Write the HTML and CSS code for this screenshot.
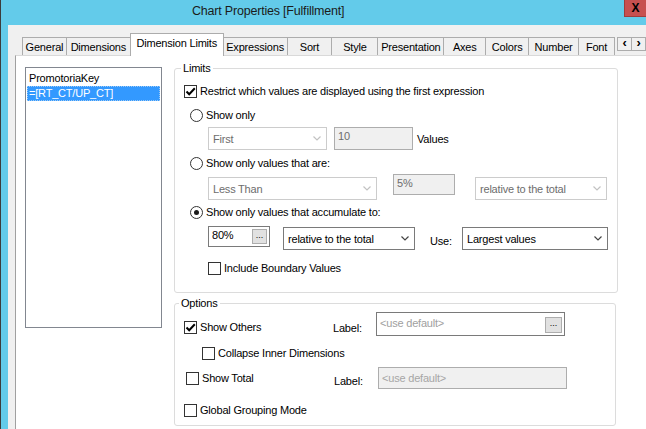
FILE: index.html
```html
<!DOCTYPE html>
<html>
<head>
<meta charset="utf-8">
<link rel="stylesheet" href="styles.css">
</head>
<body>
<div class="window">
  <div class="titlebar">
    <span class="title">Chart Properties [Fulfillment]</span>
    <div class="close">X</div>
  </div>
  <div class="client">
    <div class="tabstrip">
      <div class="tab w-general">General</div>
      <div class="tab w-dims">Dimensions</div>
      <div class="tab active w-dimlim">Dimension Limits</div>
      <div class="tab w-expr">Expressions</div>
      <div class="tab w-sort">Sort</div>
      <div class="tab w-style">Style</div>
      <div class="tab w-pres">Presentation</div>
      <div class="tab w-axes">Axes</div>
      <div class="tab w-colors">Colors</div>
      <div class="tab w-number">Number</div>
      <div class="tab w-font">Font</div>
      <div class="scroller">
        <div class="sbtn">&lsaquo;</div>
        <div class="sbtn">&rsaquo;</div>
      </div>
    </div>
    <div class="tabpage">
      <div class="list">
        <div class="item">PromotoriaKey</div>
        <div class="item sel">=[RT_CT/UP_CT]</div>
      </div>
      <div class="right">
        <div class="group limits">
          <span class="legend">Limits</span>
          <div class="row l1">
            <span class="cb"><svg viewBox="0 0 11 11"><path d="M1.5 5.5 L4.2 8.3 L9.8 2.2" fill="none" stroke="#000" stroke-width="2"/></svg></span>
            <span>Restrict which values are displayed using the first expression</span>
          </div>
          <div class="row l2">
            <span class="rb"></span><span>Show only</span>
          </div>
          <div class="row l3">
            <div class="combo dis w119"><span>First</span><svg viewBox="0 0 8 5"><path d="M0.5 0.5 L4 4 L7.5 0.5" fill="none" stroke="#c2c2c2" stroke-width="1.2"/></svg></div>
            <div class="edit dis e10">10</div>
            <span class="values">Values</span>
          </div>
          <div class="row l4">
            <span class="rb"></span><span>Show only values that are:</span>
          </div>
          <div class="row l5">
            <div class="combo dis w169 mt3"><span>Less Than</span><svg viewBox="0 0 8 5"><path d="M0.5 0.5 L4 4 L7.5 0.5" fill="none" stroke="#c2c2c2" stroke-width="1.2"/></svg></div>
            <div class="edit dis e5">5%</div>
            <div class="combo dis w132 mt3 ml20"><span>relative to the total</span><svg viewBox="0 0 8 5"><path d="M0.5 0.5 L4 4 L7.5 0.5" fill="none" stroke="#c2c2c2" stroke-width="1.2"/></svg></div>
          </div>
          <div class="row l6">
            <span class="rb on"></span><span>Show only values that accumulate to:</span>
          </div>
          <div class="row l7">
            <div class="edit e80"><span>80%</span><span class="dots">...</span></div>
            <div class="combo w132 mt1 ml13"><span>relative to the total</span><svg viewBox="0 0 8 5"><path d="M0.5 0.5 L4 4 L7.5 0.5" fill="none" stroke="#444" stroke-width="1.2"/></svg></div>
            <span class="use">Use:</span>
            <div class="combo w146 mt1"><span>Largest values</span><svg viewBox="0 0 8 5"><path d="M0.5 0.5 L4 4 L7.5 0.5" fill="none" stroke="#444" stroke-width="1.2"/></svg></div>
          </div>
          <div class="row l8">
            <span class="cb"></span><span>Include Boundary Values</span>
          </div>
        </div>
        <div class="group options">
          <span class="legend">Options</span>
          <div class="row o1">
            <div class="col1 c149"><span class="cb"><svg viewBox="0 0 11 11"><path d="M1.5 5.5 L4.2 8.3 L9.8 2.2" fill="none" stroke="#000" stroke-width="2"/></svg></span><span>Show Others</span></div>
            <span class="lbl l43">Label:</span>
            <div class="edit txt w189 h24"><span class="ph">&lt;use default&gt;</span><span class="dots big">...</span></div>
          </div>
          <div class="row o2">
            <span class="cb"></span><span>Collapse Inner Dimensions</span>
          </div>
          <div class="row o3">
            <div class="col1 c150"><span class="cb"></span><span>Show Total</span></div>
            <span class="lbl l44">Label:</span>
            <div class="edit dis txt w189 h22"><span class="ph">&lt;use default&gt;</span></div>
          </div>
          <div class="row o4">
            <span class="cb"></span><span>Global Grouping Mode</span>
          </div>
        </div>
      </div>
    </div>
  </div>
</div>
</body>
</html>
```
FILE: styles.css
```css
* { box-sizing: border-box; }
html, body { margin: 0; padding: 0; }
body {
  width: 646px; height: 429px; overflow: hidden;
  font-family: "Liberation Sans", Arial, sans-serif;
  font-size: 11px; letter-spacing: -0.2px; color: #000; background: #fff;
}
.window {
  height: 429px; display: flex; flex-direction: column;
  background: #63cbea; border-left: 1px solid #3c3c3c;
}
.titlebar { height: 25px; flex: none; display: flex; align-items: flex-start; }
.title { padding-left: 191px; padding-top: 4px; font-size: 12.5px; line-height: 15px; color: #1b1b1b; }
.close {
  margin-left: auto; width: 22px; height: 17px;
  background: #c75050; border: 1px solid #a03c3c; border-top: none; border-right: none;
  display: flex; align-items: center; justify-content: center;
  font-weight: bold; font-size: 12px; color: #000; letter-spacing: 0;
}
.client {
  flex: 1; min-height: 0; margin-left: 7px; background: #f0f0f0;
  display: flex; flex-direction: column;
}
.tabstrip {
  height: 30px; flex: none; display: flex; align-items: flex-end;
  padding-left: 14px;
}
.tab {
  height: 18px; border: 1px solid #acacac; border-bottom: none;
  background: #f0f0f0; display: flex; align-items: center; justify-content: center;
  white-space: nowrap; padding-top: 1px;
}
.tab + .tab { margin-left: -1px; }
.tab.active {
  height: 23px; background: #fff; position: relative; z-index: 1;
  margin-bottom: -1px; align-items: flex-start; padding-top: 3px;
}
.w-general { width: 45px; }
.w-dims { width: 65px; }
.w-dimlim { width: 94px; }
.w-expr { width: 65px; }
.w-sort { width: 46px; }
.w-style { width: 47px; }
.w-pres { width: 67px; }
.w-axes { width: 43px; }
.w-colors { width: 44px; }
.w-number { width: 51px; }
.w-font { width: 37px; }
.scroller { display: flex; align-self: flex-start; margin-top: 12px; margin-left: 2px; }
.sbtn {
  width: 15px; height: 14px; border: 1px solid #acacac; background: #f0f0f0;
  display: flex; align-items: center; justify-content: center;
  font-size: 13px; font-weight: bold; line-height: 12px; padding-bottom: 2px;
}
.sbtn + .sbtn { margin-left: -1px; }
.tabpage {
  flex: 1; min-height: 0; margin-left: 7px;
  border-left: 1px solid #a0a0a0; border-top: 1px solid #d9d9d9;
  background: #fff; display: flex; align-items: flex-start;
  padding: 11px 0 0 9px;
}
.list {
  width: 137px; height: 261px; flex: none;
  border: 1px solid #828790; padding: 3px 1px;
}
.item { height: 15px; line-height: 15px; padding-left: 2px; white-space: nowrap; }
.item.sel { background: #3399ff; color: #fff; outline: 1px dotted #9cc9f5; outline-offset: -1px; }
.right { margin-left: 12px; display: flex; flex-direction: column; }
.group {
  position: relative; border: 1px solid #dcdcdc; border-radius: 3px;
  padding-left: 9px; display: flex; flex-direction: column;
}
.limits { width: 444px; height: 225px; margin-top: 1px; }
.options { width: 442px; height: 123px; margin-top: 10px; }
.legend {
  position: absolute; top: -8px; left: 6px; padding: 0 2px;
  background: #fff; line-height: 14px;
}
.options .legend { left: 4px; }
.row { display: flex; align-items: center; height: 16px; white-space: nowrap; flex: none; }
.cb {
  width: 13px; height: 13px; border: 1px solid #333; background: #fff;
  margin-right: 3px; flex: none; display: flex;
}
.cb svg { width: 11px; height: 11px; }
.rb {
  width: 13px; height: 13px; border: 1px solid #333; border-radius: 50%;
  background: #fff; margin-right: 3px; flex: none;
  display: flex; align-items: center; justify-content: center;
}
.rb.on::after { content: ""; width: 5px; height: 5px; border-radius: 50%; background: #1a1a1a; }
.l1 { margin-top: 14px; }
.l2 { margin-top: 8px; padding-left: 6px; }
.l3 { margin-top: 4px; height: 23px; padding-left: 24px; }
.l4 { margin-top: 5px; padding-left: 6px; }
.l5 { margin-top: 3px; height: 26px; padding-left: 24px; align-items: flex-start; }
.l6 { margin-top: 4px; padding-left: 6px; }
.l7 { margin-top: 6px; height: 24px; padding-left: 24px; align-items: flex-start; }
.l8 { margin-top: 10px; padding-left: 24px; }
.combo {
  height: 23px; border: 1px solid #7a7a7a; background: #fff;
  display: flex; align-items: center; justify-content: space-between;
  padding: 0 5px 0 4px; flex: none;
}
.combo svg { width: 8px; height: 5px; }
.combo.dis { border-color: #cccccc; color: #6d6d6d; }
.w119 { width: 119px; }
.w169 { width: 169px; }
.w132 { width: 132px; }
.w146 { width: 146px; }
.w189 { width: 189px; }
.mt1 { margin-top: 1px; }
.mt3 { margin-top: 3px; }
.ml13 { margin-left: 13px; }
.ml20 { margin-left: 20px; }
.edit {
  height: 21px; border: 1px solid #7a7a7a; background: #fff;
  padding: 1px 2px 0 3px; line-height: 14px; flex: none;
}
.edit.dis { background: #f0f0f0; border-color: #adadad; color: #6d6d6d; }
.e10 { width: 79px; height: 23px; margin-left: 7px; }
.values { margin-left: 4px; }
.e5 { width: 62px; margin-left: 16px; }
.e80 { width: 62px; display: flex; justify-content: space-between; align-items: flex-start; padding-right: 2px; }
.dots {
  width: 15px; height: 15px; margin-top: 1px; border: 1px solid #adadad; background: #e1e1e1;
  font-size: 9px; line-height: 11px; text-align: center; color: #000; letter-spacing: 0;
}
.dots.big { width: 17px; height: 16px; margin-top: 3px; }
.use { width: 32px; margin-left: 15px; margin-top: 9px; }
.o1 { margin-top: 8px; height: 24px; }
.o2 { margin-top: 9px; padding-left: 18px; }
.o3 { margin-top: 6px; height: 22px; }
.o4 { margin-top: 13px; }
.col1 { display: flex; align-items: center; padding-top: 6px; }
.c149 { width: 149px; }
.c150 { width: 150px; padding-left: 2px; padding-top: 0; }
.lbl { padding-top: 8px; }
.o3 .lbl { padding-top: 6px; }
.l43 { width: 43px; }
.l44 { width: 44px; }
.txt { display: flex; justify-content: space-between; align-items: flex-start; padding-top: 3px; padding-right: 2px; }
.txt .dots.big { margin-top: 1px; }
.h24 { height: 24px; }
.h22 { height: 22px; }
.ph { color: #a0a0a0; }
.edit.dis .ph { color: #a6a6a6; }
```
